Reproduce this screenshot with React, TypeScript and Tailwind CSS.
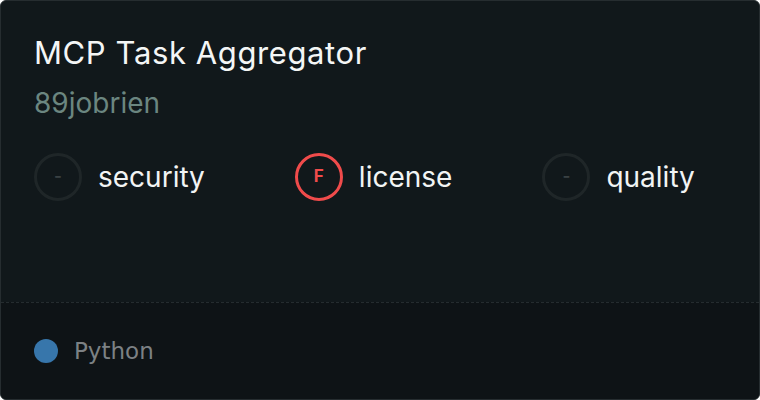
import React from "react";

function Badge({ grade, label, active }: { grade: string; label: string; active?: boolean }) {
  return (
    <div className="flex items-center gap-4">
      <div
        className={
          active
            ? "flex h-12 w-12 items-center justify-center rounded-full border-[3px] border-[#f04b4b] text-[17px] font-bold text-[#f04b4b]"
            : "flex h-12 w-12 items-center justify-center rounded-full border-[3px] border-[#1f2628] text-[17px] font-semibold text-[#3a4143]"
        }
      >
        {grade}
      </div>
      <span className="text-[28px] leading-[36px] text-[#f2f4f4]">{label}</span>
    </div>
  );
}

export default function App() {
  return (
    <div className="h-[400px] w-[760px] bg-white" style={{ fontFamily: "Inter, 'Noto Sans', sans-serif" }}>
      <div className="flex h-full w-full flex-col overflow-hidden rounded-[6px] border border-[#262d30] bg-[#11181b]">
        <div className="flex flex-1 flex-col px-[33px] pt-[32px]">
          <div className="text-[31px] leading-[40px] tracking-[0.6px] text-[#f4f6f6]">MCP Task Aggregator</div>
          <div className="mt-[12px] text-[28px] leading-[36px] text-[#6b8680]">89jobrien</div>
          <div className="mt-[32px] flex gap-[90px]">
            <Badge grade="-" label="security" />
            <Badge grade="F" label="license" active />
            <Badge grade="-" label="quality" />
          </div>
        </div>
        <div className="flex h-[97px] items-center gap-4 border-t border-dashed border-[#252c2f] bg-[#0e1316] px-[33px]">
          <div className="h-6 w-6 rounded-full bg-[#3776ab]" />
          <span className="text-[23px] text-[#7c8184]" style={{ fontFamily: "'DejaVu Sans', sans-serif" }}>
            Python
          </span>
        </div>
      </div>
    </div>
  );
}
